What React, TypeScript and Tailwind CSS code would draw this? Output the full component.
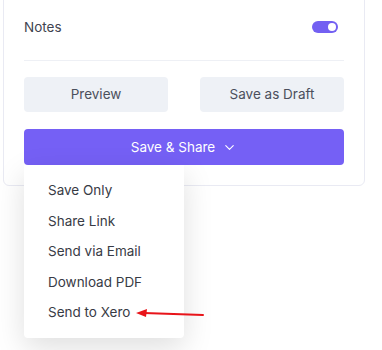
import { ChevronDown } from "lucide-react";

const menuItems = ["Save Only", "Share Link", "Send via Email", "Download PDF", "Send to Xero"];

export default function App() {
  return (
    <div className="relative h-[350px] w-[382px] overflow-hidden bg-white font-['Inter','Noto_Sans',sans-serif]">
      <div className="ml-[3px] -mt-[10px] w-[362px] rounded-md border border-[#e9eaf3] bg-white px-5 pt-[24px] pb-5">
        {/* notes toggle row */}
        <div className="flex h-[24px] items-center justify-between">
          <span className="text-[13.5px] text-[#3f4451]">Notes</span>
          <div className="mr-[6px] flex h-[12px] w-[26px] items-center justify-end rounded-full bg-[#7360f2] pr-[2px]">
            <div className="h-[8px] w-[8px] rounded-full bg-white" />
          </div>
        </div>
        <div className="mt-[21px] h-px bg-[#eef0f5]" />

        <div className="mt-4 flex gap-8">
          <button className="h-[35px] flex-1 rounded-[4px] bg-[#eef1f6] text-[13.5px] text-[#4b4f5c]">Preview</button>
          <button className="h-[35px] flex-1 rounded-[4px] bg-[#eef1f6] text-[13.5px] text-[#4b4f5c]">Save as Draft</button>
        </div>

        <div className="relative mt-[17px]">
          <button className="flex h-[36px] w-full items-center justify-center gap-[7px] rounded-[4px] bg-[#7560f5] text-[13.5px] text-white">
            Save &amp; Share
            <ChevronDown className="h-[15px] w-[15px]" strokeWidth={1.8} />
          </button>

          {/* dropdown menu */}
          <div className="absolute left-0 top-[36px] z-10 w-[160px] rounded-b-[4px] bg-white pt-[10px] pb-[10px] pl-6 shadow-[0_10px_30px_rgba(0,0,0,0.13)]">
            {menuItems.map((item) => (
              <div key={item} className="flex h-[30.5px] items-center text-[13.5px] text-[#383b45]">
                {item}
              </div>
            ))}
          </div>
        </div>
      </div>

      {/* annotation arrow */}
      <svg className="absolute left-[134px] top-[306px] z-20" width="72" height="14" viewBox="0 0 72 14">
        <line x1="10" y1="7" x2="69" y2="9" stroke="#e8141a" strokeWidth="2" strokeLinecap="round" />
        <polygon points="2,7 13,3 12,11" fill="#e8141a" />
      </svg>
    </div>
  );
}
